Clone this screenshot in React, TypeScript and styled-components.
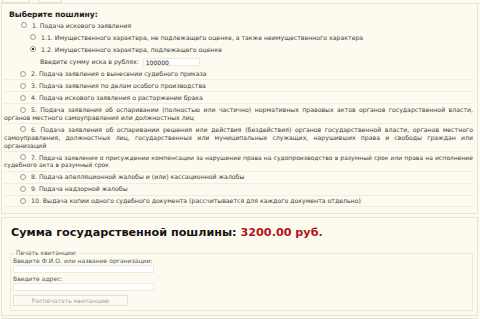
import styled, { createGlobalStyle } from 'styled-components'

const GlobalStyle = createGlobalStyle`
  html, body {
    margin: 0;
    padding: 0;
    background: #fdfbef;
  }
  body {
    font-family: 'DejaVu Sans', Verdana, sans-serif;
    color: #404040;
  }
`

const Page = styled.div`
  width: 480px;
  height: 319px;
  overflow: hidden;
  background: #fdfbef;
`

const TabStrip = styled.div`
  display: flex;
  gap: 8px;
  height: 3px;
  padding-left: 2px;
  border-bottom: 1px solid #e9e6d8;
`

const TabStub = styled.div<{ $w: number }>`
  width: ${(p) => p.$w}px;
  border: 1px solid #e2dfd0;
  border-top: none;
`

const Panel = styled.section`
  margin: 0 2px 0 1px;
  border: 1px solid #e7e4d5;
  border-top: none;
  padding: 6px 4px 6px 2px;
`

const Title = styled.div`
  font-weight: bold;
  font-size: 7.6px;
  line-height: 9px;
  color: #1a1a1a;
  padding-left: 5px;
  margin-bottom: 1px;
`

const Row = styled.div<{ $indent: number; $line?: boolean; $size?: number }>`
  font-size: ${(p) => p.$size ?? 6.2}px;
  line-height: 7.8px;
  padding: 1.8px 0 1.4px 0;
  text-indent: ${(p) => p.$indent}px;
  text-align: justify;
  border-bottom: 1px solid ${(p) => (p.$line ? '#f0ede0' : 'transparent')};
`

const Radio = styled.input.attrs({ type: 'radio' })`
  appearance: none;
  width: 6px;
  height: 6px;
  margin: 0 5px 0 0;
  vertical-align: -0.5px;
  border: 1px solid #a09e96;
  border-radius: 50%;
  background: radial-gradient(circle at 60% 65%, #ffffff 40%, #e4e2da 100%);
  box-sizing: border-box;
  &:checked {
    background: radial-gradient(circle, #3a3a3a 0 1.1px, #ffffff 1.5px);
  }
`

const SumInput = styled.input`
  width: 57px;
  height: 8px;
  box-sizing: border-box;
  margin-left: 4px;
  padding: 0 2px;
  border: 1px solid #ece9dc;
  background: #ffffff;
  font-family: inherit;
  font-size: 6.05px;
  color: #222;
  vertical-align: middle;
`

const SumPanel = styled.section`
  margin: 3px 2px 0 1px;
  border: 1px solid #e7e4d5;
  padding: 8px 4px 4px 8px;
`

const SumTitle = styled.h2`
  margin: 0 0 9px 1px;
  font-size: 11.2px;
  line-height: 14px;
  font-weight: bold;
  color: #141414;
`

const Amount = styled.span`
  color: #b3141a;
`

const Receipt = styled.fieldset`
  margin: 0;
  padding: 0 2px 4px 2px;
  border: 1px solid #ebe8da;
  font-size: 6.05px;
  line-height: 7.5px;
  color: #555;
`

const Legend = styled.legend`
  padding: 0 1px;
  margin-left: 2px;
  font-size: 6.05px;
`

const Label = styled.div`
  margin-top: 0;
`

const TextField = styled.input`
  display: block;
  width: 141px;
  height: 8px;
  box-sizing: border-box;
  margin: 1px 0 1.5px 0;
  border: 1px solid #eceadf;
  background: #ffffff;
`

const PrintButton = styled.button`
  display: block;
  width: 115px;
  height: 11px;
  margin-top: 4px;
  padding: 0;
  border: 1px solid #e4e1d4;
  background: #fbfaf4;
  font-family: inherit;
  font-size: 6.05px;
  color: #a3a19a;
`

const Footer = styled.div`
  margin: 2px 2px 0 1px;
  height: 4px;
  border-top: 1px solid #e7e4d5;
  display: flex;
  gap: 42px;
  padding-left: 104px;
`

const Tick = styled.div`
  width: 1px;
  height: 4px;
  background: #cfcdc2;
`

const options: { text: string; size?: number }[] = [
  { text: 'Подача заявления о вынесении судебного приказа' },
  { text: 'Подача заявления по делам особого производства' },
  { text: 'Подача искового заявления о расторжении брака' },
  {
    text: 'Подача заявления об оспаривании (полностью или частично) нормативных правовых актов органов государственной власти, органов местного самоуправления или должностных лиц',
  },
  {
    text: 'Подача заявления об оспаривании решения или действия (бездействия) органов государственной власти, органов местного самоуправления, должностных лиц, государственных или муниципальных служащих, нарушивших права и свободы граждан или организаций',
  },
  {
    text: 'Подача заявления о присуждении компенсации за нарушение права на судопроизводство в разумный срок или права на исполнение судебного акта в разумный срок',
    size: 6.05,
  },
  { text: 'Подача апелляционной жалобы и (или) кассационной жалобы' },
  { text: 'Подача надзорной жалобы' },
  { text: 'Выдача копии одного судебного документа (рассчитывается для каждого документа отдельно)' },
]

const App = () => {
  return (
    <Page>
      <GlobalStyle />
      <TabStrip>
        <TabStub $w={26} />
        <TabStub $w={22} />
      </TabStrip>

      <Panel>
        <Title>Выберите пошлину:</Title>
        <Row $indent={17}>
          <Radio name="fee" />
          1. Подача искового заявления
        </Row>
        <Row $indent={26}>
          <Radio name="sub" />
          1.1. Имущественного характера, не подлежащего оценке, а также неимущественного характера
        </Row>
        <Row $indent={26}>
          <Radio name="sub" defaultChecked />
          1.2. Имущественного характера, подлежащего оценке
        </Row>
        <Row $indent={36}>
          Введите сумму иска в рублях:
          <SumInput defaultValue="100000" />
        </Row>
        {options.map((item, i) => (
          <Row key={i} $indent={16} $line $size={item.size}>
            <Radio name="fee" />
            {i + 2}. {item.text}
          </Row>
        ))}
      </Panel>

      <SumPanel>
        <SumTitle>
          Сумма государственной пошлины: <Amount>3200.00 руб.</Amount>
        </SumTitle>
        <Receipt>
          <Legend>Печать квитанции:</Legend>
          <Label>Введите Ф.И.О. или название организации:</Label>
          <TextField />
          <Label>Введите адрес:</Label>
          <TextField />
          <PrintButton>Распечатать квитанцию</PrintButton>
        </Receipt>
      </SumPanel>

      <Footer>
        <Tick />
        <Tick />
      </Footer>
    </Page>
  )
}

export default App
